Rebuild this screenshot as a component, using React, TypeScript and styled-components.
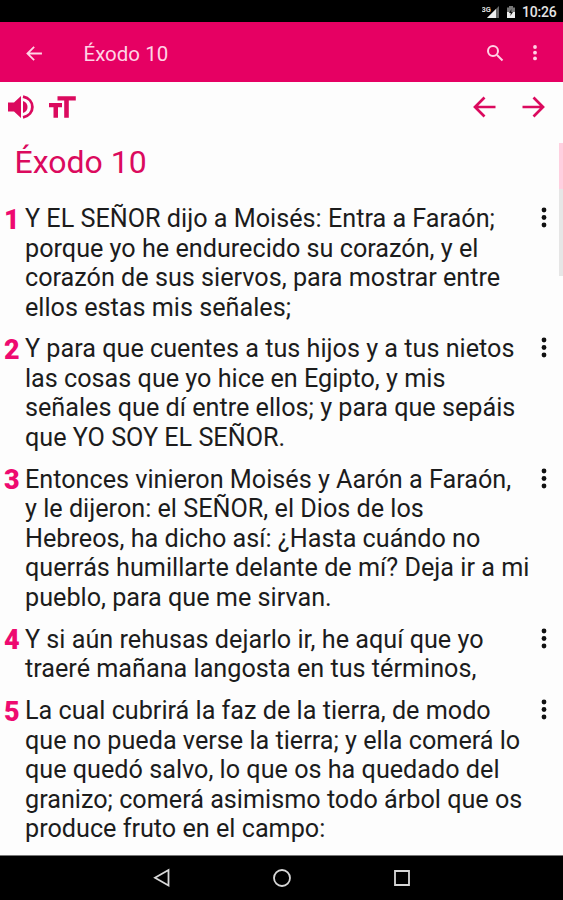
import React from 'react';
import styled, { createGlobalStyle } from 'styled-components';

const PINK = '#e60063';

const GlobalStyle = createGlobalStyle`
  * { box-sizing: border-box; }
  body { margin: 0; background: #fdfdfd; font-family: Roboto, sans-serif; }
`;

const Screen = styled.div`
  display: flex;
  flex-direction: column;
  width: 563px;
  height: 900px;
  overflow: hidden;
  background: #fdfdfd;
`;

const StatusBar = styled.div`
  display: flex;
  flex: 0 0 22px;
  align-items: center;
  justify-content: flex-end;
  padding: 2px 6.5px 0 0;
  background: #000;
  color: #e4e4e4;
`;

const Clock = styled.span`
  margin-left: 6px;
  font-size: 14px;
  font-weight: 500;
  line-height: 18px;
  letter-spacing: -0.2px;
`;

const AppBar = styled.header`
  display: flex;
  flex: 0 0 60px;
  align-items: center;
  padding: 2px 18px 0 24px;
  background: ${PINK};
  color: #ffd3e5;
`;

const BarTitle = styled.h1`
  flex: 1;
  margin: 2px 0 0 40.5px;
  font-size: 20.5px;
  font-weight: 400;
  line-height: 24px;
`;

const Tools = styled.div`
  display: flex;
  flex: 0 0 50px;
  align-items: center;
  padding: 0 18px 0 7px;
  color: #db0a5e;
`;

const IconButton = styled.button<{ $gap?: number }>`
  display: flex;
  margin: 0 0 0 ${({ $gap = 0 }) => $gap}px;
  padding: 0;
  border: 0;
  background: none;
  color: inherit;
`;

const Spacer = styled.div`
  flex: 1;
`;

const Content = styled.main`
  position: relative;
  flex: 1;
  overflow: hidden;
`;

const ChapterTitle = styled.h2`
  margin: 10px 0 0 14.5px;
  color: #db0a5e;
  font-size: 32px;
  font-weight: 400;
  line-height: 40px;
`;

const VerseList = styled.div`
  display: flex;
  flex-direction: column;
  gap: 12.4px;
  padding-top: 22px;
`;

const Verse = styled.article`
  display: grid;
  grid-template-columns: 25px minmax(0, 1fr) 38px;
  align-items: start;
`;

const VerseNumber = styled.span`
  padding: 1.5px 0 0 4px;
  color: #ee0a70;
  font-size: 27px;
  font-weight: 900;
  line-height: 29.5px;
`;

const VerseText = styled.p`
  margin: 0;
  color: #1c1c1c;
  font-size: 25.2px;
  line-height: 29.5px;
  white-space: pre;
`;

const VerseMenu = styled.button`
  display: flex;
  margin: 3px 0 0 15px;
  padding: 0;
  border: 0;
  background: none;
  color: #111;
`;

const ScrollTrack = styled.div`
  position: absolute;
  top: 11px;
  right: 0;
  width: 4px;
  height: 133px;
  background: #e6e6e6;
`;

const ScrollMark = styled.div`
  height: 46px;
  background: #ffd0e0;
`;

const NavBar = styled.nav`
  display: flex;
  flex: 0 0 45px;
  align-items: center;
  justify-content: center;
  gap: 96px;
  border-top: 1px solid #777;
  background: #000;
  color: #d8d8d8;
`;

const verses = [
  'Y EL SEÑOR dijo a Moisés: Entra a Faraón;\nporque yo he endurecido su corazón, y el\ncorazón de sus siervos, para mostrar entre\nellos estas mis señales;',
  'Y para que cuentes a tus hijos y a tus nietos\nlas cosas que yo hice en Egipto, y mis\nseñales que dí entre ellos; y para que sepáis\nque YO SOY EL SEÑOR.',
  'Entonces vinieron Moisés y Aarón a Faraón,\ny le dijeron: el SEÑOR, el Dios de los\nHebreos, ha dicho así: ¿Hasta cuándo no\nquerrás humillarte delante de mí? Deja ir a mi\npueblo, para que me sirvan.',
  'Y si aún rehusas dejarlo ir, he aquí que yo\ntraeré mañana langosta en tus términos,',
  'La cual cubrirá la faz de la tierra, de modo\nque no pueda verse la tierra; y ella comerá lo\nque quedó salvo, lo que os ha quedado del\ngranizo; comerá asimismo todo árbol que os\nproduce fruto en el campo:',
];

const Signal = () => (
  <svg width="19" height="16" viewBox="0 0 19 16">
    <path d="M17 2v12H5z" fill="#666" />
    <path d="M14 5v9H5z" fill="#eee" />
    <text x="-0.5" y="7.500" fontSize="7.500" fontWeight="700" fill="#ddd">3G</text>
  </svg>
);

const Battery = () => (
  <svg width="10" height="14" viewBox="0 0 10 14">
    <path d="M3 1h4v1.500h2V13H1V2.500h2z" fill="#777" />
    <path d="M1 7h8v6H1z" fill="#eee" />
    <path d="M5.500 4 3 8h1.800L4.300 11 7 7H5.200z" fill="#111" />
  </svg>
);

const Arrow = ({ size, stroke, right = false }: { size: number; stroke: number; right?: boolean }) => (
  <svg width={size} height={size} viewBox="0 0 24 24" fill="none" stroke="currentColor" strokeWidth={stroke}>
    <path d={right ? 'M1.500 12h20M12.500 2.500 22 12l-9.500 9.500' : 'M22.500 12h-20M11.500 2.500 2 12l9.500 9.500'} />
  </svg>
);

const Search = () => (
  <svg width="18" height="18" viewBox="0 0 18 18" fill="none" stroke="currentColor" strokeWidth="2">
    <circle cx="7" cy="7" r="5" />
    <path d="m11 11 5.500 5.500" />
  </svg>
);

const BarDots = () => (
  <svg width="4" height="18" viewBox="0 0 4 18" fill="currentColor">
    <circle cx="2" cy="3" r="1.900" />
    <circle cx="2" cy="8.700" r="1.900" />
    <circle cx="2" cy="14.400" r="1.900" />
  </svg>
);

const VerseDots = () => (
  <svg width="8" height="22" viewBox="0 0 8 22" fill="currentColor">
    <circle cx="4" cy="3" r="2.400" />
    <circle cx="4" cy="10.500" r="2.400" />
    <circle cx="4" cy="18" r="2.400" />
  </svg>
);

const Speaker = () => (
  <svg width="28" height="26" viewBox="0 0 28 26" fill="currentColor">
    <path d="M1 8.500h6l7-6.500v22l-7-6.500H1z" />
    <path d="M16 7q4.500 1.500 4.500 6t-4.500 6z" />
    <path d="M16 2.700c12.500 2.500 12.500 18.100 0 20.600" fill="none" stroke="currentColor" strokeWidth="2.800" />
  </svg>
);

const TextSize = () => (
  <svg width="28" height="24" viewBox="0 0 28 24" fill="currentColor">
    <path d="M8.500 1.200h18.300v4.200h-7v17.300h-4.600V5.400H8.500z" />
    <path d="M0 8h13v4.200H9v10.500H4.500V12.200H0z" />
  </svg>
);

export default function App() {
  return (
    <>
      <GlobalStyle />
      <Screen>
        <StatusBar>
          <Signal />
          <IconButton as="span" $gap={5}><Battery /></IconButton>
          <Clock>10:26</Clock>
        </StatusBar>
        <AppBar>
          <IconButton $gap={2}><Arrow size={17} stroke={2.5} /></IconButton>
          <BarTitle>Éxodo 10</BarTitle>
          <IconButton><Search /></IconButton>
          <IconButton $gap={29}><BarDots /></IconButton>
          <IconButton as="span" $gap={8} />
        </AppBar>
        <Tools>
          <IconButton><Speaker /></IconButton>
          <IconButton $gap={14}><TextSize /></IconButton>
          <Spacer />
          <IconButton><Arrow size={24} stroke={2.7} /></IconButton>
          <IconButton $gap={24}><Arrow size={24} stroke={2.7} right /></IconButton>
        </Tools>
        <Content>
          <ChapterTitle>Éxodo 10</ChapterTitle>
          <VerseList>
            {verses.map((text, index) => (
              <Verse key={index}>
                <VerseNumber>{index + 1}</VerseNumber>
                <VerseText>{text}</VerseText>
                <VerseMenu><VerseDots /></VerseMenu>
              </Verse>
            ))}
          </VerseList>
          <ScrollTrack><ScrollMark /></ScrollTrack>
        </Content>
        <NavBar>
          <svg width="24" height="24" viewBox="0 0 24 24" fill="none" stroke="currentColor" strokeWidth="1.800">
            <path d="M18.500 4v15.500L5 11.800z" />
          </svg>
          <svg width="24" height="24" viewBox="0 0 24 24" fill="none" stroke="currentColor" strokeWidth="1.800">
            <circle cx="12" cy="12" r="8" />
          </svg>
          <svg width="24" height="24" viewBox="0 0 24 24" fill="none" stroke="currentColor" strokeWidth="1.800">
            <path d="M5 5h14v14H5z" />
          </svg>
        </NavBar>
      </Screen>
    </>
  );
}
